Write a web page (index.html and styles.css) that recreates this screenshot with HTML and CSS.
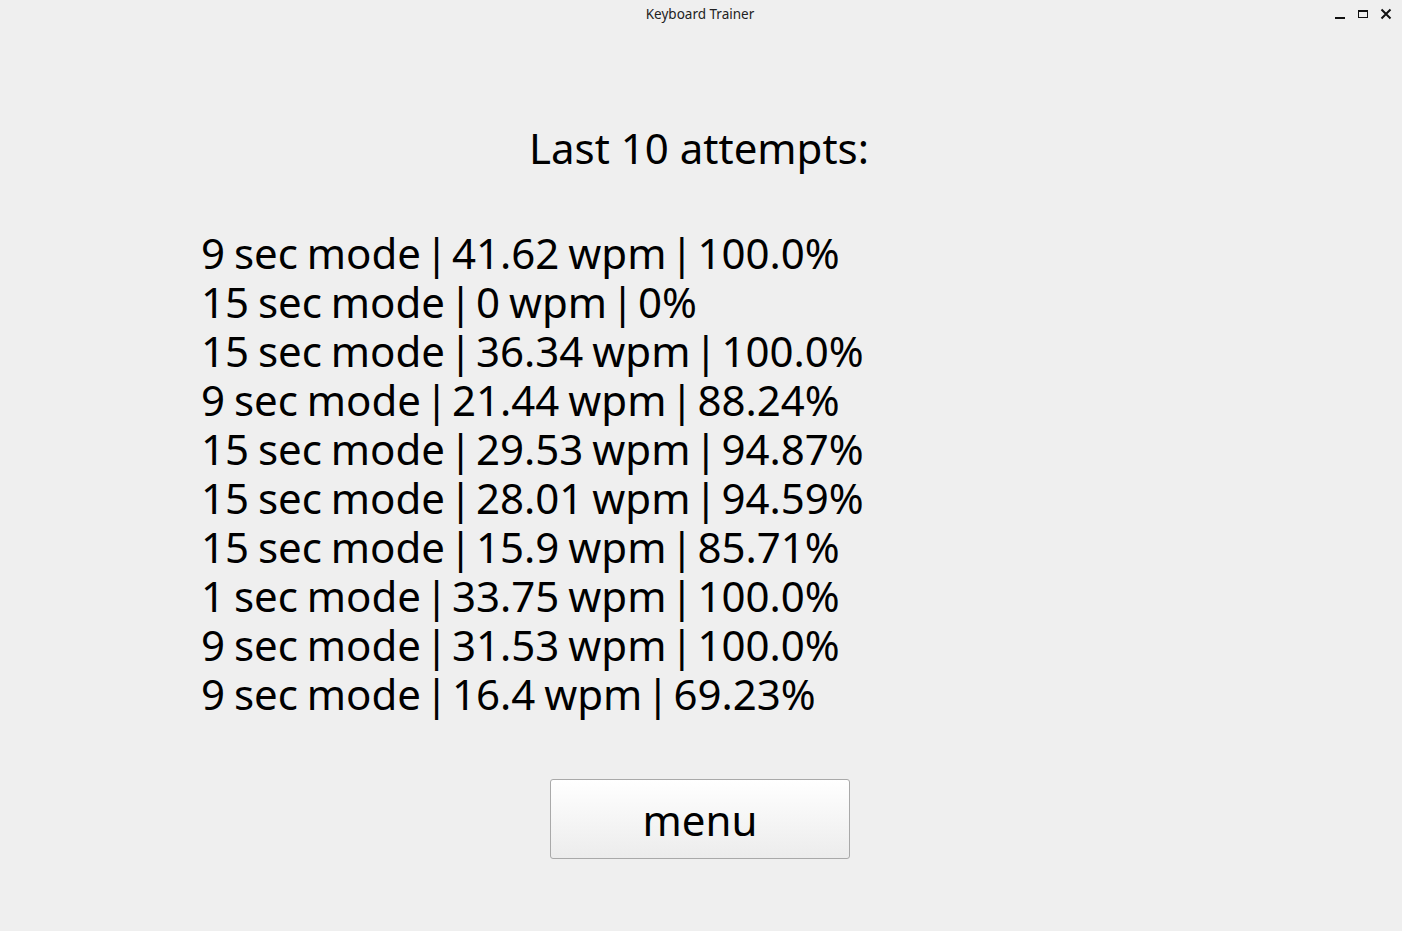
FILE: index.html
```html
<!DOCTYPE html>
<html>
<head>
<meta charset="utf-8">
<title>Keyboard Trainer</title>
<link rel="stylesheet" href="styles.css">
</head>
<body>
<div class="titlebar">
  <div class="title-text">Keyboard Trainer</div>
  <div class="controls">
    <svg class="ctl" width="12" height="12" viewBox="0 0 12 12"><rect x="1" y="9" width="10" height="2" fill="#111"/></svg>
    <svg class="ctl" width="12" height="12" viewBox="0 0 12 12"><rect x="1.5" y="2.5" width="9" height="7" fill="none" stroke="#111" stroke-width="1"/><rect x="1" y="2" width="10" height="2" fill="#111"/></svg>
    <svg class="ctl" width="12" height="12" viewBox="0 0 12 12"><path d="M1.5 1.5 L10.5 10.5 M10.5 1.5 L1.5 10.5" stroke="#111" stroke-width="2" fill="none"/></svg>
  </div>
</div>
<main class="content">
  <h1 class="heading">Last 10 attempts:</h1>
  <div class="attempts">
    <div class="row">9 sec mode<span class="sep"> | </span>41.62 wpm<span class="sep"> | </span>100.0%</div>
    <div class="row">15 sec mode<span class="sep"> | </span>0 wpm<span class="sep"> | </span>0%</div>
    <div class="row">15 sec mode<span class="sep"> | </span>36.34 wpm<span class="sep"> | </span>100.0%</div>
    <div class="row">9 sec mode<span class="sep"> | </span>21.44 wpm<span class="sep"> | </span>88.24%</div>
    <div class="row">15 sec mode<span class="sep"> | </span>29.53 wpm<span class="sep"> | </span>94.87%</div>
    <div class="row">15 sec mode<span class="sep"> | </span>28.01 wpm<span class="sep"> | </span>94.59%</div>
    <div class="row">15 sec mode<span class="sep"> | </span>15.9 wpm<span class="sep"> | </span>85.71%</div>
    <div class="row">1 sec mode<span class="sep"> | </span>33.75 wpm<span class="sep"> | </span>100.0%</div>
    <div class="row">9 sec mode<span class="sep"> | </span>31.53 wpm<span class="sep"> | </span>100.0%</div>
    <div class="row">9 sec mode<span class="sep"> | </span>16.4 wpm<span class="sep"> | </span>69.23%</div>
  </div>
  <div class="btn-wrap"><button class="menu-btn">menu</button></div>
</main>
</body>
</html>
```
FILE: styles.css
```css
html, body {
  margin: 0;
  padding: 0;
  background: #efefef;
  width: 1402px;
  height: 931px;
  overflow: hidden;
  font-family: "Noto Sans", sans-serif;
  color: #000;
}
.titlebar {
  height: 27px;
  display: flex;
  align-items: center;
  justify-content: center;
  position: relative;
}
.title-text {
  font-size: 13.5px;
  color: #222;
  padding-right: 2px;
}
.controls {
  position: absolute;
  right: 10px;
  top: 8px;
  display: flex;
  gap: 11px;
}
.content {
  display: flex;
  flex-direction: column;
}
.heading {
  margin: 96px 0 0 0;
  padding-right: 4px;
  font-weight: normal;
  font-size: 42px;
  line-height: 49px;
  text-align: center;
}
.attempts {
  margin: 56px 0 0 201px;
  font-size: 42px;
  line-height: 49px;
  word-spacing: -2px;
}
.sep {
  word-spacing: -7px;
}
.btn-wrap {
  display: flex;
  justify-content: center;
  margin-top: 61px;
  padding-right: 2px;
}
.menu-btn {
  width: 300px;
  height: 80px;
  border: 1px solid #a9a9a9;
  border-radius: 3px;
  background: linear-gradient(#ffffff, #ececec);
  font-family: "Noto Sans", sans-serif;
  font-size: 42px;
  color: #000;
  padding: 0;
}
```
